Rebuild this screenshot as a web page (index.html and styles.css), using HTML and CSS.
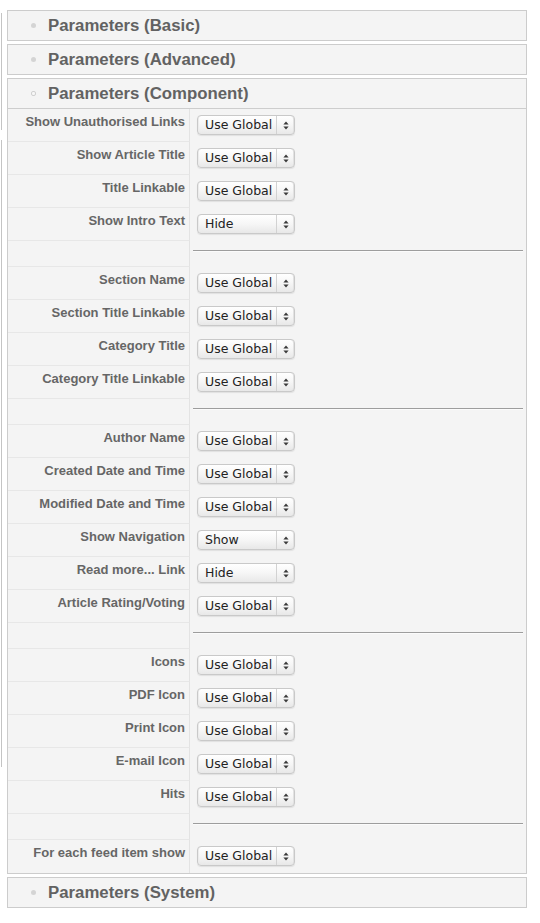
FILE: index.html
```html
<!DOCTYPE html>
<html>
<head>
<meta charset="utf-8">
<title>Parameters</title>
<link rel="stylesheet" href="styles.css">
</head>
<body>
<div class="edge edge-a"></div>
<div class="edge edge-b"></div>
<div class="page">
  <div class="panel">
    <div class="panel-head"><span class="dot"></span><span class="title">Parameters (Basic)</span></div>
  </div>
  <div class="panel">
    <div class="panel-head"><span class="dot"></span><span class="title">Parameters (Advanced)</span></div>
  </div>
  <div class="panel open">
    <div class="panel-head"><span class="dot"></span><span class="title">Parameters (Component)</span></div>
    <div class="params">
      <div class="row"><div class="label">Show Unauthorised Links</div><div class="value"><div class="select"><span class="sel-text">Use Global</span><span class="sel-arrows"><svg width="6" height="9" viewBox="0 0 6 9"><polygon points="0.4,3.6 3,0.4 5.6,3.6"/><polygon points="0.4,5.4 3,8.6 5.6,5.4"/></svg></span></div></div></div>
      <div class="row"><div class="label">Show Article Title</div><div class="value"><div class="select"><span class="sel-text">Use Global</span><span class="sel-arrows"><svg width="6" height="9" viewBox="0 0 6 9"><polygon points="0.4,3.6 3,0.4 5.6,3.6"/><polygon points="0.4,5.4 3,8.6 5.6,5.4"/></svg></span></div></div></div>
      <div class="row"><div class="label">Title Linkable</div><div class="value"><div class="select"><span class="sel-text">Use Global</span><span class="sel-arrows"><svg width="6" height="9" viewBox="0 0 6 9"><polygon points="0.4,3.6 3,0.4 5.6,3.6"/><polygon points="0.4,5.4 3,8.6 5.6,5.4"/></svg></span></div></div></div>
      <div class="row"><div class="label">Show Intro Text</div><div class="value"><div class="select"><span class="sel-text">Hide</span><span class="sel-arrows"><svg width="6" height="9" viewBox="0 0 6 9"><polygon points="0.4,3.6 3,0.4 5.6,3.6"/><polygon points="0.4,5.4 3,8.6 5.6,5.4"/></svg></span></div></div></div>
      <div class="row spacer"><div class="label"></div><div class="value"><div class="rule"></div></div></div>

      <div class="row"><div class="label">Section Name</div><div class="value"><div class="select"><span class="sel-text">Use Global</span><span class="sel-arrows"><svg width="6" height="9" viewBox="0 0 6 9"><polygon points="0.4,3.6 3,0.4 5.6,3.6"/><polygon points="0.4,5.4 3,8.6 5.6,5.4"/></svg></span></div></div></div>
      <div class="row"><div class="label">Section Title Linkable</div><div class="value"><div class="select"><span class="sel-text">Use Global</span><span class="sel-arrows"><svg width="6" height="9" viewBox="0 0 6 9"><polygon points="0.4,3.6 3,0.4 5.6,3.6"/><polygon points="0.4,5.4 3,8.6 5.6,5.4"/></svg></span></div></div></div>
      <div class="row"><div class="label">Category Title</div><div class="value"><div class="select"><span class="sel-text">Use Global</span><span class="sel-arrows"><svg width="6" height="9" viewBox="0 0 6 9"><polygon points="0.4,3.6 3,0.4 5.6,3.6"/><polygon points="0.4,5.4 3,8.6 5.6,5.4"/></svg></span></div></div></div>
      <div class="row"><div class="label">Category Title Linkable</div><div class="value"><div class="select"><span class="sel-text">Use Global</span><span class="sel-arrows"><svg width="6" height="9" viewBox="0 0 6 9"><polygon points="0.4,3.6 3,0.4 5.6,3.6"/><polygon points="0.4,5.4 3,8.6 5.6,5.4"/></svg></span></div></div></div>
      <div class="row spacer"><div class="label"></div><div class="value"><div class="rule"></div></div></div>

      <div class="row"><div class="label">Author Name</div><div class="value"><div class="select"><span class="sel-text">Use Global</span><span class="sel-arrows"><svg width="6" height="9" viewBox="0 0 6 9"><polygon points="0.4,3.6 3,0.4 5.6,3.6"/><polygon points="0.4,5.4 3,8.6 5.6,5.4"/></svg></span></div></div></div>
      <div class="row"><div class="label">Created Date and Time</div><div class="value"><div class="select"><span class="sel-text">Use Global</span><span class="sel-arrows"><svg width="6" height="9" viewBox="0 0 6 9"><polygon points="0.4,3.6 3,0.4 5.6,3.6"/><polygon points="0.4,5.4 3,8.6 5.6,5.4"/></svg></span></div></div></div>
      <div class="row"><div class="label">Modified Date and Time</div><div class="value"><div class="select"><span class="sel-text">Use Global</span><span class="sel-arrows"><svg width="6" height="9" viewBox="0 0 6 9"><polygon points="0.4,3.6 3,0.4 5.6,3.6"/><polygon points="0.4,5.4 3,8.6 5.6,5.4"/></svg></span></div></div></div>
      <div class="row"><div class="label">Show Navigation</div><div class="value"><div class="select"><span class="sel-text">Show</span><span class="sel-arrows"><svg width="6" height="9" viewBox="0 0 6 9"><polygon points="0.4,3.6 3,0.4 5.6,3.6"/><polygon points="0.4,5.4 3,8.6 5.6,5.4"/></svg></span></div></div></div>
      <div class="row"><div class="label">Read more... Link</div><div class="value"><div class="select"><span class="sel-text">Hide</span><span class="sel-arrows"><svg width="6" height="9" viewBox="0 0 6 9"><polygon points="0.4,3.6 3,0.4 5.6,3.6"/><polygon points="0.4,5.4 3,8.6 5.6,5.4"/></svg></span></div></div></div>
      <div class="row"><div class="label">Article Rating/Voting</div><div class="value"><div class="select"><span class="sel-text">Use Global</span><span class="sel-arrows"><svg width="6" height="9" viewBox="0 0 6 9"><polygon points="0.4,3.6 3,0.4 5.6,3.6"/><polygon points="0.4,5.4 3,8.6 5.6,5.4"/></svg></span></div></div></div>
      <div class="row spacer"><div class="label"></div><div class="value"><div class="rule"></div></div></div>

      <div class="row"><div class="label">Icons</div><div class="value"><div class="select"><span class="sel-text">Use Global</span><span class="sel-arrows"><svg width="6" height="9" viewBox="0 0 6 9"><polygon points="0.4,3.6 3,0.4 5.6,3.6"/><polygon points="0.4,5.4 3,8.6 5.6,5.4"/></svg></span></div></div></div>
      <div class="row"><div class="label">PDF Icon</div><div class="value"><div class="select"><span class="sel-text">Use Global</span><span class="sel-arrows"><svg width="6" height="9" viewBox="0 0 6 9"><polygon points="0.4,3.6 3,0.4 5.6,3.6"/><polygon points="0.4,5.4 3,8.6 5.6,5.4"/></svg></span></div></div></div>
      <div class="row"><div class="label">Print Icon</div><div class="value"><div class="select"><span class="sel-text">Use Global</span><span class="sel-arrows"><svg width="6" height="9" viewBox="0 0 6 9"><polygon points="0.4,3.6 3,0.4 5.6,3.6"/><polygon points="0.4,5.4 3,8.6 5.6,5.4"/></svg></span></div></div></div>
      <div class="row"><div class="label">E-mail Icon</div><div class="value"><div class="select"><span class="sel-text">Use Global</span><span class="sel-arrows"><svg width="6" height="9" viewBox="0 0 6 9"><polygon points="0.4,3.6 3,0.4 5.6,3.6"/><polygon points="0.4,5.4 3,8.6 5.6,5.4"/></svg></span></div></div></div>
      <div class="row"><div class="label">Hits</div><div class="value"><div class="select"><span class="sel-text">Use Global</span><span class="sel-arrows"><svg width="6" height="9" viewBox="0 0 6 9"><polygon points="0.4,3.6 3,0.4 5.6,3.6"/><polygon points="0.4,5.4 3,8.6 5.6,5.4"/></svg></span></div></div></div>
      <div class="row spacer"><div class="label"></div><div class="value"><div class="rule"></div></div></div>

      <div class="row last"><div class="label">For each feed item show</div><div class="value"><div class="select"><span class="sel-text">Use Global</span><span class="sel-arrows"><svg width="6" height="9" viewBox="0 0 6 9"><polygon points="0.4,3.6 3,0.4 5.6,3.6"/><polygon points="0.4,5.4 3,8.6 5.6,5.4"/></svg></span></div></div></div>
    </div>
  </div>
  <div class="panel">
    <div class="panel-head"><span class="dot"></span><span class="title">Parameters (System)</span></div>
  </div>
</div>
</body>
</html>
```

FILE: styles.css
```css
html, body {
  margin: 0;
  padding: 0;
  background: #ffffff;
}

body {
  font-family: "Liberation Sans", Arial, sans-serif;
  position: relative;
  min-height: 923px;
}

.edge {
  position: absolute;
  left: 1px;
  width: 1px;
  background: #c4c4c4;
}
.edge-a { top: 13px; height: 117px; }
.edge-b { top: 140px; height: 627px; }

.page {
  padding: 10px 0 0 7px;
  display: flex;
  flex-direction: column;
  gap: 3px;
}

.panel {
  width: 520px;
  box-sizing: border-box;
  border: 1px solid #cccccc;
  background: #f4f4f4;
}

.panel-head {
  height: 29px;
  display: flex;
  align-items: center;
}

.open .panel-head {
  border-bottom: 1px solid #cdcdcd;
}

.dot {
  width: 5px;
  height: 5px;
  border-radius: 50%;
  background: #d4d4d4;
  margin-left: 23px;
  margin-right: 12px;
  flex: none;
}

.open .dot {
  width: 5px;
  height: 5px;
  box-sizing: border-box;
  background: #f7f7f7;
  border: 1px solid #d0d0d0;
  border-radius: 2px;
}

.title {
  font-weight: bold;
  font-size: 16.8px;
  color: #626262;
  line-height: 29px;
}

.params {
  display: flex;
  flex-direction: column;
}

.row {
  display: flex;
  height: 33px;
}

.row.spacer {
  height: 26px;
}

.label {
  width: 182px;
  flex: none;
  box-sizing: border-box;
  border-right: 1px solid #e3e3e3;
  border-bottom: 1px solid #e7e7e7;
  text-align: right;
  padding: 5px 4px 0 0;
  font-weight: bold;
  font-size: 13px;
  line-height: 16px;
  color: #666666;
  white-space: nowrap;
}

.row.last .label {
  border-bottom: none;
}

.value {
  flex: 1;
  padding: 6px 0 0 7px;
}

.spacer .value {
  padding: 9px 3px 0 3px;
}

.rule {
  border-top: 1px solid #9d9d9d;
  border-bottom: 1px solid #fbfbfb;
}

.select {
  width: 98px;
  height: 20px;
  box-sizing: border-box;
  border: 1px solid #c9c9c9;
  border-radius: 4px;
  background: linear-gradient(#ffffff 0%, #f6f6f6 50%, #e8e8e8 100%);
  box-shadow: 0 1px 1px rgba(0, 0, 0, 0.08), inset 1px 0 0 #ececec, inset -1px 0 0 #e2e2e2;
  display: flex;
  align-items: center;
}

.sel-text {
  flex: 1;
  padding-left: 7px;
  font-family: "DejaVu Sans", "Liberation Sans", sans-serif;
  font-size: 12.5px;
  color: #222222;
  line-height: 18px;
  white-space: nowrap;
}

.sel-arrows {
  width: 18px;
  height: 18px;
  box-sizing: border-box;
  border-left: 1px solid #d2d2d2;
  display: flex;
  align-items: center;
  justify-content: center;
}

.sel-arrows svg {
  display: block;
  fill: #3a3a3a;
}
```
